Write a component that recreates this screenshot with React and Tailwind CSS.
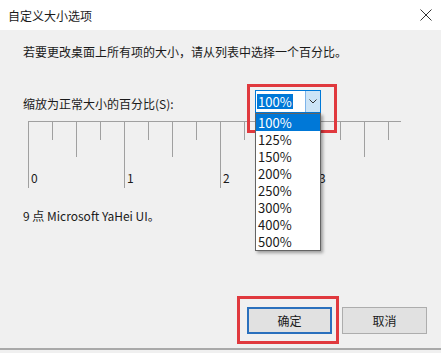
import React from 'react'

const font = { fontFamily: '"Noto Sans CJK SC", "Noto Sans", sans-serif' }

const options = ['100%', '125%', '150%', '200%', '250%', '300%', '400%', '500%']

// ruler ticks: every 24px, long on k%4==0, medium on k%4==2
const Ruler = () => {
    const ticks = Array.from({ length: 16 }, (_, k) => k)
    return (
        <div className="relative ml-[5px] h-[69px] w-[374px]">
            <svg width="374" height="69" className="absolute left-0 top-0">
                <line x1="0.5" y1="0.5" x2="373" y2="0.5" stroke="#a0a0a0" />
                {ticks.map((k) => {
                    const x = k * 24 + 0.5
                    const y2 = k % 4 === 0 ? 67 : k % 2 === 0 ? 36 : 19
                    return <line key={k} x1={x} y1="0" x2={x} y2={y2} stroke="#a0a0a0" />
                })}
            </svg>
            {[0, 1, 2, 3].map((n) => (
                <span
                    key={n}
                    className="absolute top-[48px] text-[12px] leading-[17px] text-[#1a1a1a]"
                    style={{ left: n * 96 + 3 }}
                >
                    {n}
                </span>
            ))}
        </div>
    )
}

export default function App() {
    return (
        <div className="relative h-[353px] w-[441px] overflow-hidden bg-[#f0f0f0] text-[#1a1a1a]" style={font}>
            {/* title bar */}
            <div className="flex h-[30px] items-center justify-between bg-white pl-[8px] pr-[9px]">
                <span className="text-[12px] leading-[17px]">自定义大小选项</span>
                <svg width="12" height="12" viewBox="0 0 12 12">
                    <path d="M0.5 0.5 L11.5 11.5 M11.5 0.5 L0.5 11.5" stroke="#333" strokeWidth="1" />
                </svg>
            </div>

            <div className="flex flex-col border-b-2 border-[#a9a9a9] pl-[23px]">
                <p className="mt-[13px] text-[12px] leading-[17px]">若要更改桌面上所有项的大小，请从列表中选择一个百分比。</p>

                {/* label + combobox */}
                <div className="mt-[30px] flex h-[23px] items-center">
                    <span className="mt-[3px] w-[232px] text-[12px] leading-[17px]">缩放为正常大小的百分比(S):</span>
                    <div className="flex h-[23px] w-[66px] border border-[#0078d7] bg-white">
                        <div className="flex flex-1 items-center pl-[1px]">
                            <span className="bg-[#0078d7] px-[1px] text-[13px] leading-[15px] text-white">100%</span>
                        </div>
                        <div className="flex w-[15px] items-center justify-center border-l border-[#7eb4ea] bg-[#cce4f7]">
                            <svg width="8" height="5" viewBox="0 0 8 5">
                                <path d="M0.5 0.5 L4 4 L7.5 0.5" fill="none" stroke="#333" />
                            </svg>
                        </div>
                    </div>
                </div>

                <div className="mt-[8px]">
                    <Ruler />
                </div>

                <p className="mt-[17px] text-[12px] leading-[17px]">9 点 Microsoft YaHei UI。</p>

                {/* buttons */}
                <div className="mt-[83px] mb-[14px] flex justify-end gap-[10px] pr-[14px]">
                    <button className="h-[27px] w-[85px] border-2 border-[#2a70bd] bg-[#e1e1e1] text-[12px]">确定</button>
                    <button className="h-[27px] w-[85px] border border-[#adadad] bg-[#e1e1e1] text-[12px]">取消</button>
                </div>
            </div>

            {/* red annotation frames */}
            <div className="absolute left-[247px] top-[84px] h-[49px] w-[90px] border-[3px] border-[#e0393e]" />
            <div className="absolute left-[237px] top-[296px] h-[48px] w-[102px] border-[3px] border-[#e0393e]" />

            {/* open dropdown list */}
            <div className="absolute left-[255px] top-[113px] w-[66px] border border-[#646464] bg-white shadow-[2px_2px_3px_rgba(0,0,0,0.35)]">
                {options.map((o, i) => (
                    <div
                        key={o}
                        className={`h-[17px] pl-[2px] text-[13px] leading-[17px] ${i === 0 ? 'bg-[#0078d7] text-white' : 'text-[#1a1a1a]'}`}
                    >
                        {o}
                    </div>
                ))}
            </div>
        </div>
    )
}
